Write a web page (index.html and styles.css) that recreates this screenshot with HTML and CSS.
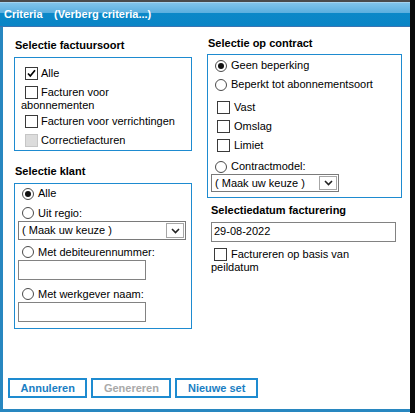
FILE: index.html
```html
<!DOCTYPE html>
<html lang="nl">
<head>
<meta charset="utf-8">
<title>Criteria</title>
<link rel="stylesheet" href="styles.css">
</head>
<body>
<div class="screen">
  <div class="frame">
    <div class="topline"></div>
    <div class="titlebar"><span class="title">Criteria</span><span class="toggle">(Verberg criteria...)</span></div>
    <div class="window">
      <div class="columns">
        <div class="col col-left">
          <div class="heading h-soort">Selectie factuursoort</div>
          <div class="box box-soort">
            <div class="cb-item"><span class="cb"><svg width="11" height="11" viewBox="0 0 11 11"><path d="M2 5.5 L4.3 8 L9 2.3" fill="none" stroke="#000" stroke-width="1.7"/></svg></span>Alle</div>
            <div class="cb-item cb-wrap"><span class="cb"></span>Facturen voor abonnementen</div>
            <div class="cb-item"><span class="cb"></span>Facturen voor verrichtingen</div>
            <div class="cb-item"><span class="cb cb-disabled"></span>Correctiefacturen</div>
          </div>
          <div class="heading h-klant">Selectie klant</div>
          <div class="box box-klant">
            <div class="opt k1"><span class="rb rb-on"></span>Alle</div>
            <div class="opt k2"><span class="rb"></span>Uit regio:</div>
            <div class="select sel-regio"><span class="sel-text">( Maak uw keuze )</span><span class="sel-btn"><svg width="9" height="6" viewBox="0 0 9 6"><path d="M1 1 L4.5 4.5 L8 1" fill="none" stroke="#222" stroke-width="1.6"/></svg></span></div>
            <div class="opt k3"><span class="rb"></span>Met debiteurennummer:</div>
            <div class="input input-klant"></div>
            <div class="opt k4"><span class="rb"></span>Met werkgever naam:</div>
            <div class="input input-klant"></div>
          </div>
        </div>
        <div class="col col-right">
          <div class="heading h-contract">Selectie op contract</div>
          <div class="box box-contract">
            <div class="opt c1"><span class="rb rb-on"></span>Geen beperking</div>
            <div class="opt c2"><span class="rb"></span>Beperkt tot abonnementsoort</div>
            <div class="opt c3"><span class="cb"></span>Vast</div>
            <div class="opt c4"><span class="cb"></span>Omslag</div>
            <div class="opt c5"><span class="cb"></span>Limiet</div>
            <div class="opt c6"><span class="rb"></span>Contractmodel:</div>
            <div class="select sel-contract"><span class="sel-text">( Maak uw keuze )</span><span class="sel-btn"><svg width="9" height="6" viewBox="0 0 9 6"><path d="M1 1 L4.5 4.5 L8 1" fill="none" stroke="#222" stroke-width="1.6"/></svg></span></div>
          </div>
          <div class="datum">
            <div class="heading">Selectiedatum facturering</div>
            <div class="input input-date">29-08-2022</div>
            <div class="cb-item peil"><span class="cb"></span>Factureren op basis van peildatum</div>
          </div>
        </div>
      </div>
      <div class="buttons">
        <div class="btn">Annuleren</div>
        <div class="btn btn-disabled">Genereren</div>
        <div class="btn">Nieuwe set</div>
      </div>
    </div>
  </div>
  <div class="edge"></div>
</div>
</body>
</html>
```
FILE: styles.css
```css
* { box-sizing: border-box; }
html, body { margin: 0; padding: 0; background: #fff; }
body {
  font-family: "Liberation Sans", Arial, sans-serif;
  font-size: 11px;
  line-height: 13px;
  color: #000;
}
.screen { display: flex; width: 415px; height: 413px; overflow: hidden; }
.frame { width: 410px; flex: none; display: flex; flex-direction: column; }
.edge { width: 5px; flex: none; background: #0a0a0a; }
.topline { height: 2px; flex: none; background: #4a4a4a; }
.titlebar {
  height: 25px;
  flex: none;
  display: flex;
  align-items: center;
  padding-left: 4px;
  color: #fff;
  font-weight: bold;
  border-bottom: 1px solid #3a73b2;
  background: linear-gradient(to bottom, #c4e3f5 0px, #80c3e9 1px, #5aafdf 11px, #0b88c8 11px, #0a85c6 24px);
}
.toggle { margin-left: 11.5px; }
.window {
  height: 385px;
  flex: none;
  display: flex;
  flex-direction: column;
  border-left: 3px solid #2887c0;
  border-bottom: 3px solid #2887c0;
}
.columns { display: flex; align-items: flex-start; gap: 15px; padding-left: 11px; }
.col-left { width: 178px; padding-top: 12px; }
.col-right { width: 195px; padding-top: 10px; }
.heading { font-weight: bold; }
.h-soort { padding-left: 1px; margin-bottom: 5px; }
.h-klant { padding-left: 1px; margin-top: 14px; margin-bottom: 5px; }
.h-contract { padding-left: 1px; margin-bottom: 4px; }
.box { border: 1px solid #1e8bd0; background: #fff; }

/* checkbox list with wrapping labels */
.box-soort { height: 94px; padding: 3px 8px 0 6px; }
.cb-item { padding-top: 6px; line-height: 13px; }
.cb-wrap { margin-bottom: -3px; }
.cb {
  display: inline-block;
  width: 13px;
  height: 13px;
  border: 1px solid #3a3a3a;
  background: #fff;
  vertical-align: -3px;
  margin: 0 3px 0 4px;
}
.cb svg { display: block; }
.cb-disabled { background: #dcdcdc; border-color: #c6c6c6; }

/* radio / option rows */
.opt { display: flex; align-items: center; padding-left: 3px; }
.opt .cb { flex: none; margin: 0 4px 0 6px; }
.rb {
  flex: none;
  width: 12px;
  height: 12px;
  margin: 0 4px 0 4px;
  border: 1px solid #4a4a4a;
  border-radius: 50%;
  background: #fff;
  display: flex;
  align-items: center;
  justify-content: center;
}
.rb-on::after {
  content: "";
  width: 6px;
  height: 6px;
  border-radius: 50%;
  background: #111;
}

.box-klant { height: 146px; padding-bottom: 6px; }
.k1 { height: 19px; }
.k2 { height: 18px; padding-top: 2px; }
.k3 { height: 20px; padding-top: 4px; }
.k4 { height: 22px; padding-top: 6px; }

.box-contract { padding-bottom: 5px; }
.c1 { height: 21px; }
.c2 { height: 17px; }
.c3 { height: 19px; margin-top: 5px; }
.c4 { height: 19px; }
.c5 { height: 19px; }
.c6 { height: 19px; padding-top: 4px; }

.select {
  display: flex;
  align-items: center;
  margin-left: 3px;
  border: 1px solid #7a7a7a;
  background: #fff;
}
.sel-text { flex: 1; padding-left: 3px; white-space: nowrap; }
.sel-btn {
  flex: none;
  width: 18px;
  height: 15px;
  margin-right: 1px;
  border: 1px solid #a6a6a6;
  display: flex;
  align-items: center;
  justify-content: center;
}
.sel-btn svg { display: block; }
.sel-regio { width: 168px; height: 19px; }
.sel-contract { width: 128px; height: 18px; }
.sel-contract .sel-btn { height: 14px; }

.input { height: 20px; border: 1px solid #828282; background: #fff; }
.input-klant { width: 128px; margin-left: 3px; }

.datum { width: 189px; margin-top: 6px; padding-left: 4px; }
.datum .heading { margin-bottom: 5px; }
.input-date { width: 185px; padding-left: 2px; line-height: 16px; }
.peil .cb { margin: 0 4px 0 3px; }

.buttons {
  display: flex;
  gap: 4px;
  margin-top: auto;
  margin-bottom: 11px;
  padding-left: 5px;
}
.btn {
  height: 20px;
  padding: 0 10.5px;
  border: 2px solid #1e8bd0;
  background: #fff;
  color: #1a7ec3;
  font-weight: bold;
  line-height: 16px;
}
.btn-disabled { color: #a9a9a9; }
```
